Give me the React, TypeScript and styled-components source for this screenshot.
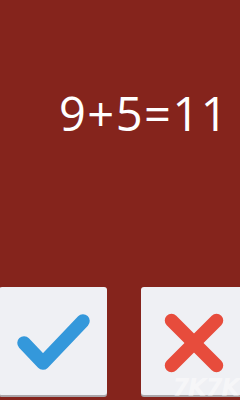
import React from "react"
import styled, { createGlobalStyle } from "styled-components"

const GlobalStyle = createGlobalStyle`
  html, body {
    margin: 0;
    padding: 0;
    background: #85241c;
    overflow: hidden;
  }
`

const Screen = styled.div`
  position: relative;
  width: 240px;
  height: 400px;
  background: #85241c;
  display: flex;
  flex-direction: column;
  overflow: hidden;
  font-family: "Open Sans", "Noto Sans", sans-serif;
`

const Equation = styled.div`
  margin-top: 90px;
  padding-left: 59px;
  font-size: 47px;
  line-height: 1;
  letter-spacing: 1.5px;
  color: #ffffff;
  white-space: nowrap;
`

const Answers = styled.div`
  margin-top: auto;
  margin-bottom: 5px;
  margin-left: -1px;
  display: flex;
  gap: 34px;
`

const AnswerButton = styled.button`
  flex-shrink: 0;
  width: 108px;
  height: 108px;
  padding: 0;
  border: none;
  border-radius: 3px;
  background: #eff0f4;
  box-shadow: 0 2px 0 #aaa6aa;
  display: block;
  cursor: pointer;

  svg {
    display: block;
  }
`

const Watermark = styled.div`
  position: absolute;
  right: 1px;
  bottom: 0;
  font-family: "DejaVu Sans", sans-serif;
  font-weight: bold;
  font-style: italic;
  font-size: 24px;
  line-height: 1;
  letter-spacing: -1px;
  color: rgba(255, 255, 255, 0.45);
`

export default function App() {
  return (
    <Screen>
      <GlobalStyle />
      <Equation>9+5=11</Equation>
      <Answers>
        <AnswerButton aria-label="correct">
          <svg width="108" height="108" viewBox="0 0 108 108">
            <polyline
              points="25,56 44,76 84,34"
              fill="none"
              stroke="#3498db"
              strokeWidth={13.5}
              strokeLinecap="round"
              strokeLinejoin="round"
            />
          </svg>
        </AnswerButton>
        <AnswerButton aria-label="wrong">
          <svg width="108" height="108" viewBox="0 0 108 108">
            <g stroke="#e74c3c" strokeWidth={13.5} strokeLinecap="round">
              <line x1="30.5" y1="33.5" x2="75.5" y2="78.5" />
              <line x1="75.5" y1="33.5" x2="30.5" y2="78.5" />
            </g>
          </svg>
        </AnswerButton>
      </Answers>
      <Watermark>7K7K</Watermark>
    </Screen>
  )
}
